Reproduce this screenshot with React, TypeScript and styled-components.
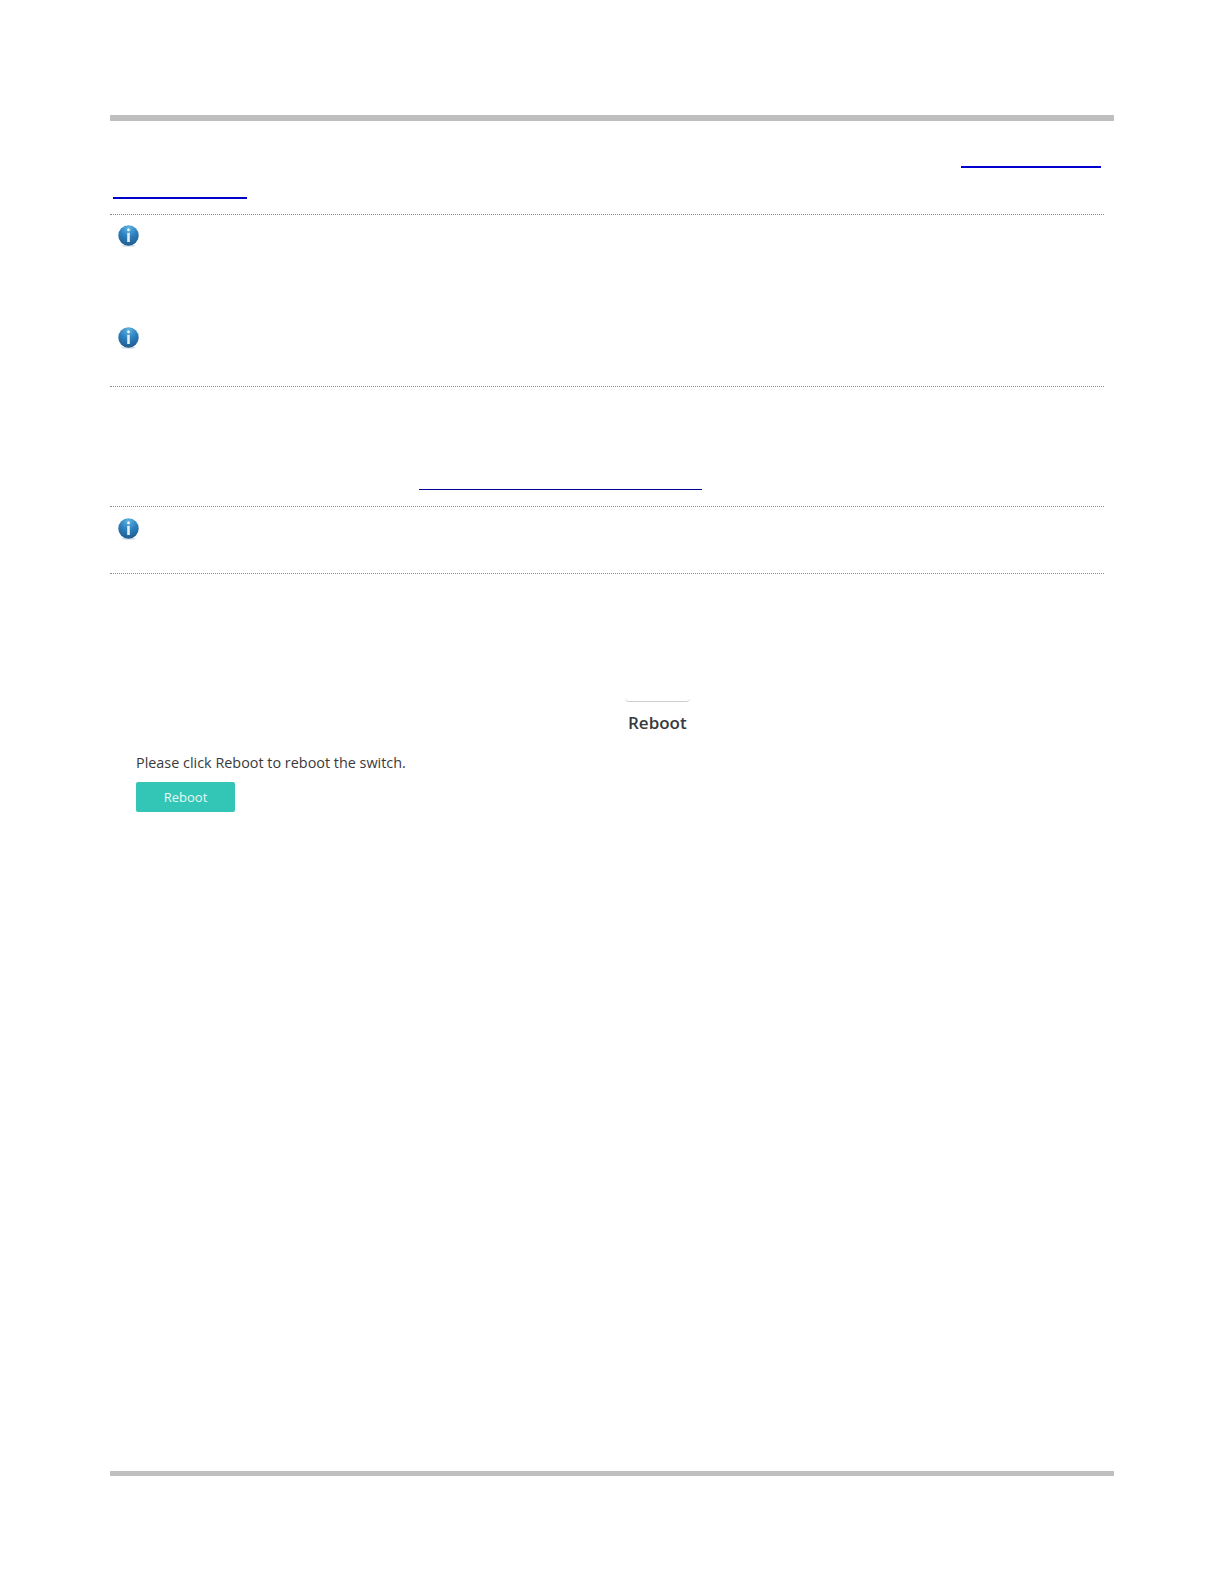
import React from "react";
import styled, { createGlobalStyle } from "styled-components";

const Global = createGlobalStyle`
  html, body { margin: 0; padding: 0; background: #fff; }
`;

const Page = styled.div`
  box-sizing: border-box;
  width: 1224px;
  height: 1584px;
  padding: 115px 0 0 110px;
  display: flex;
  flex-direction: column;
  font-family: "Open Sans", "Noto Sans", sans-serif;
`;

const PageRule = styled.div<{ $gap?: number; $height?: number }>`
  width: 1004px;
  height: ${(p) => p.$height ?? 6}px;
  flex: none;
  background: #bfbfbf;
  margin-top: ${(p) => p.$gap ?? 0}px;
`;

const LinkLine = styled.div<{ $width: number; $left: number; $top: number; $thick?: number; $color?: string }>`
  width: ${(p) => p.$width}px;
  height: ${(p) => p.$thick ?? 2}px;
  flex: none;
  margin-left: ${(p) => p.$left}px;
  margin-top: ${(p) => p.$top}px;
  background: ${(p) => p.$color ?? "#0000cc"};
`;

const NoteBox = styled.div<{ $top: number; $height: number; $inset?: number }>`
  box-sizing: border-box;
  width: 994px;
  height: ${(p) => p.$height}px;
  flex: none;
  margin-top: ${(p) => p.$top}px;
  padding: ${(p) => p.$inset ?? 10}px 0 0 8px;
  border-top: 1px dotted #8c8c8c;
  border-bottom: 1px dotted #8c8c8c;
  display: flex;
  flex-direction: column;
  gap: 80px;
`;

const IconSvg = styled.svg`
  display: block;
  width: 21px;
  height: 22px;
  flex: none;
`;

const InfoIcon = ({ id }: { id: string }) => (
  <IconSvg viewBox="0 0 21 22">
    <defs>
      <radialGradient id={id} cx="50%" cy="12%" r="90%">
        <stop offset="0%" stopColor="#5fb4e2" />
        <stop offset="50%" stopColor="#2c7fbd" />
        <stop offset="100%" stopColor="#1f5a8e" />
      </radialGradient>
    </defs>
    <ellipse cx="10.5" cy="20.7" rx="7" ry="1.1" fill="#d3dde3" />
    <circle cx="10.5" cy="10.5" r="10.2" fill={`url(#${id})`} />
    <rect x="9.2" y="3.6" width="2.6" height="2.6" rx="1" fill="#f4f9fc" />
    <rect x="9.2" y="7.8" width="2.6" height="9.2" fill="#e4eff6" />
  </IconSvg>
);

const Screenshot = styled.div`
  display: flex;
  flex-direction: column;
  align-items: flex-start;
  margin-top: 124px;
  width: 1004px;
`;

const TabCap = styled.div`
  width: 65px;
  height: 4px;
  margin-left: 515px;
  box-sizing: border-box;
  border-bottom: 1px solid #cfcfcf;
  border-radius: 0 0 5px 5px;
`;

const TabTitle = styled.div`
  margin: 9px 0 0 518px;
  font-size: 17px;
  line-height: 24px;
  font-weight: 600;
  color: #36393d;
`;

const Message = styled.div`
  margin: 18px 0 0 26px;
  font-size: 14.4px;
  line-height: 20px;
  color: #3a3a3a;
`;

const Button = styled.button`
  box-sizing: border-box;
  width: 99px;
  height: 30px;
  margin: 9px 0 0 26px;
  padding: 0;
  border: 0;
  border-radius: 2px;
  background: #33c6b7;
  color: #e6f8f5;
  font-family: inherit;
  font-size: 13px;
  line-height: 30px;
  text-align: center;
`;

export default function App() {
  return (
    <Page>
      <Global />
      <PageRule />
      <LinkLine $left={851} $top={45} $width={140} />
      <LinkLine $left={3} $top={29} $width={134} />
      <NoteBox $top={15} $height={173}>
        <InfoIcon id="info-a" />
        <InfoIcon id="info-b" />
      </NoteBox>
      <LinkLine $left={309} $top={102} $width={283} $thick={1} $color="#000099" />
      <NoteBox $top={16} $height={68} $inset={11}>
        <InfoIcon id="info-c" />
      </NoteBox>
      <Screenshot>
        <TabCap />
        <TabTitle>Reboot</TabTitle>
        <Message>Please click Reboot to reboot the switch.</Message>
        <Button>Reboot</Button>
      </Screenshot>
      <PageRule $gap={659} $height={5} />
    </Page>
  );
}
